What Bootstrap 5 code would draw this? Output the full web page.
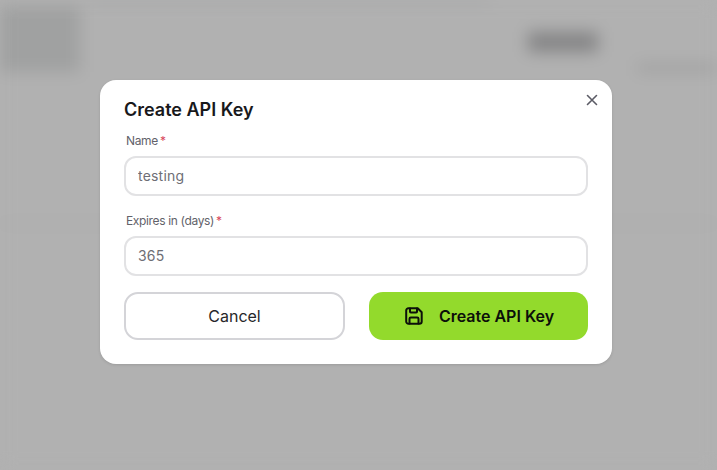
<!DOCTYPE html>
<html lang="en">
<head>
<meta charset="utf-8">
<title>Create API Key</title>
<link href="https://cdn.jsdelivr.net/npm/bootstrap@5.3.0/dist/css/bootstrap.min.css" rel="stylesheet">
<style>
html, body { height: 100%; overflow: hidden; }
body { font-family: Inter, "Liberation Sans", sans-serif; background: #b1b1b1; }
.page-under { position: absolute; inset: 0; overflow: hidden; filter: blur(8px); background: #b1b1b1; }
.under-top { height: 4px; background: #a4a5a6; margin-left: 90px; width: 400px; }
.under-side { width: 90px; height: 66px; background: #a0a1a1; margin-top: 2px; margin-left: -10px; }
.under-head { width: 70px; height: 20px; background: #858586; margin-top: 28px; margin-left: 448px; }
.under-note { width: 80px; height: 8px; background: #9f9f9f; margin-top: 12px; }
.under-rule { height: 3px; background: #a9a9a9; margin-top: 150px; }
.key-dialog { position: absolute; top: 80px; left: 100px; width: 512px; height: 284px; margin: 0; }
.key-content { background: #fff; border: 0; border-radius: 16px; padding: 20px 24px 24px; box-shadow: 0 1px 3px rgba(0,0,0,.12); height: 100%; }
.key-title { font-size: 18px; line-height: 20px; font-weight: 600; color: #18181b; margin: 0 0 12px; }
.key-close { position: absolute; top: 14px; right: 14px; width: 12px; height: 12px; padding: 0; border: 0; background: none; display: flex; color: #5c5c66; }
.key-label { font-size: 12px; line-height: 16px; color: #62626a; padding-top: 1px; margin: 0 0 7px 2px; display: block; font-weight: 400; letter-spacing: -.35px; }
.key-req { color: #d8485c; margin-left: 2px; }
.key-input { height: 40px; border: 2px solid #e2e2e4; border-radius: 12px; font-size: 14px; color: #6e6e75; padding: 0 12px 2px; letter-spacing: .2px; }
.key-input:focus { border-color: #e2e2e4; box-shadow: none; color: #6e6e75; }
.key-field { margin-bottom: 16px; }
.key-actions { gap: 24px; }
.key-btn { height: 48px; border-radius: 14px; font-size: 16px; display: flex; align-items: center; justify-content: center; }
.key-cancel { width: 221px; border: 2px solid #d4d4d8; background: #fff; color: #27272a; }
.key-save { width: 219px; border: 0; padding-left: 14px; background: #93da2c; color: #0c0f0a; font-weight: 600; gap: 16px; }
.key-save:hover, .key-cancel:hover { color: inherit; }
</style>
</head>
<body>
<div class="page-under" aria-hidden="true">
  <div class="under-top"></div>
  <div class="d-flex">
    <div class="under-side"></div>
    <div class="flex-grow-1">
      <div class="under-head"></div>
      <div class="under-note ms-auto"></div>
    </div>
  </div>
  <div class="under-rule"></div>
</div>
<div class="modal-dialog key-dialog" role="dialog">
  <div class="modal-content key-content">
    <button class="key-close" type="button" aria-label="Close">
      <svg width="12" height="12" viewBox="0 0 12 12" fill="none" stroke="currentColor" stroke-width="1.6" stroke-linecap="round"><path d="M1.5 1.5l9 9M10.5 1.5l-9 9"/></svg>
    </button>
    <h2 class="key-title">Create API Key</h2>
    <form>
      <div class="key-field">
        <label class="key-label">Name<span class="key-req">*</span></label>
        <input class="form-control key-input" value="testing">
      </div>
      <div class="key-field">
        <label class="key-label">Expires in (days)<span class="key-req">*</span></label>
        <input class="form-control key-input" value="365">
      </div>
      <div class="d-flex key-actions">
        <button type="button" class="btn key-btn key-cancel">Cancel</button>
        <button type="button" class="btn key-btn key-save">
          <svg width="18" height="18" viewBox="0 0 18 18" fill="none" stroke="currentColor" stroke-width="2" stroke-linejoin="round" stroke-linecap="round"><path d="M3.5 1.2h9.2l4 4v9.3a2.3 2.3 0 0 1-2.3 2.3H3.5a2.3 2.3 0 0 1-2.3-2.3v-11a2.3 2.3 0 0 1 2.3-2.3z"/><path d="M5 1.5v3.2a.8.8 0 0 0 .8.8h5.4a.8.8 0 0 0 .8-.8V1.5"/><path d="M4.5 16.5v-4.7a1.3 1.3 0 0 1 1.3-1.3h6.4a1.3 1.3 0 0 1 1.3 1.3v4.7"/></svg>
          <span>Create API Key</span>
        </button>
      </div>
    </form>
  </div>
</div>
</body>
</html>
